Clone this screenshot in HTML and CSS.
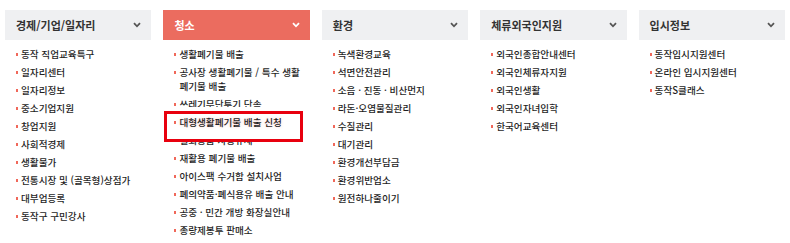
FILE: index.html
```html
<!DOCTYPE html>
<html lang="ko">
<head>
<meta charset="utf-8">
<link rel="stylesheet" href="styles.css">
</head>
<body>
<div class="menu">
  <section class="col">
    <h3 class="head">경제/기업/일자리<span class="chev"><svg width="8" height="6" viewBox="0 0 8 6"><path d="M1 1.2 L4 4.3 L7 1.2" fill="none" stroke="currentColor" stroke-width="1.8"/></svg></span></h3>
    <ul class="list">
      <li>동작 직업교육특구</li>
      <li>일자리센터</li>
      <li>일자리정보</li>
      <li>중소기업지원</li>
      <li>창업지원</li>
      <li>사회적경제</li>
      <li>생활물가</li>
      <li>전통시장 및 (골목형)상점가</li>
      <li>대부업등록</li>
      <li>동작구 구민강사</li>
    </ul>
  </section>
  <section class="col active">
    <h3 class="head">청소<span class="chev"><svg width="8" height="6" viewBox="0 0 8 6"><path d="M1 1.2 L4 4.3 L7 1.2" fill="none" stroke="currentColor" stroke-width="1.8"/></svg></span></h3>
    <ul class="list">
      <li>생활폐기물 배출</li>
      <li>공사장 생활폐기물 / 특수 생활폐기물 배출</li>
      <li>쓰레기무단투기 단속</li>
      <li class="marked">대형생활폐기물 배출 신청</li>
      <li>일회용품 사용규제</li>
      <li>재활용 폐기물 배출</li>
      <li>아이스팩 수거함 설치사업</li>
      <li>폐의약품·폐식용유 배출 안내</li>
      <li>공중 · 민간 개방 화장실안내</li>
      <li>종량제봉투 판매소</li>
    </ul>
  </section>
  <section class="col">
    <h3 class="head">환경<span class="chev"><svg width="8" height="6" viewBox="0 0 8 6"><path d="M1 1.2 L4 4.3 L7 1.2" fill="none" stroke="currentColor" stroke-width="1.8"/></svg></span></h3>
    <ul class="list">
      <li>녹색환경교육</li>
      <li>석면안전관리</li>
      <li>소음 · 진동 · 비산먼지</li>
      <li>라돈·오염물질관리</li>
      <li>수질관리</li>
      <li>대기관리</li>
      <li>환경개선부담금</li>
      <li>환경위반업소</li>
      <li>원전하나줄이기</li>
    </ul>
  </section>
  <section class="col">
    <h3 class="head">체류외국인지원<span class="chev"><svg width="8" height="6" viewBox="0 0 8 6"><path d="M1 1.2 L4 4.3 L7 1.2" fill="none" stroke="currentColor" stroke-width="1.8"/></svg></span></h3>
    <ul class="list">
      <li>외국인종합안내센터</li>
      <li>외국인체류자지원</li>
      <li>외국인생활</li>
      <li>외국인자녀입학</li>
      <li>한국어교육센터</li>
    </ul>
  </section>
  <section class="col">
    <h3 class="head">입시정보<span class="chev"><svg width="8" height="6" viewBox="0 0 8 6"><path d="M1 1.2 L4 4.3 L7 1.2" fill="none" stroke="currentColor" stroke-width="1.8"/></svg></span></h3>
    <ul class="list">
      <li>동작입시지원센터</li>
      <li>온라인 입시지원센터</li>
      <li>동작S클래스</li>
    </ul>
  </section>
</div>
</body>
</html>
```

FILE: styles.css
```css
* { box-sizing: border-box; }
html, body { margin: 0; padding: 0; background: #fff; }
body {
  font-family: "Noto Sans CJK KR", "Noto Sans", sans-serif;
  color: #333;
}
.menu {
  display: grid;
  grid-template-columns: repeat(5, 1fr);
  column-gap: 12px;
  width: 780px;
  margin: 10px 0 0 5px;
}
.head {
  margin: 0;
  height: 30px;
  display: flex;
  align-items: center;
  justify-content: space-between;
  padding: 0 10px 0 11px;
  background: #eff0f2;
  font-size: 11px;
  font-weight: 700;
  color: #333;
}
.chev { display: flex; color: #555; }
.active .head { background: #eb6c5f; color: #fff; }
.active .chev { color: #fff; }
.list {
  list-style: none;
  margin: 0;
  padding: 7px 5px 0 0;
}
.list li {
  position: relative;
  padding-left: 16px;
  font-size: 9.6px;
  font-weight: 500;
  line-height: 14px;
  margin-bottom: 4px;
  color: #1e1e1e;
}
.list li::before {
  content: "";
  position: absolute;
  left: 11px;
  top: 6px;
  width: 2px;
  height: 3px;
  background: #f0685a;
}
.list li.marked {
  z-index: 1;
  text-shadow: 0 0 3px rgba(240, 100, 100, 0.35);
}
.list li.marked::after {
  content: "";
  position: absolute;
  z-index: -1;
  left: 1px;
  top: -4px;
  width: 133px;
  height: 25px;
  border: 3px solid #e8000e;
  background: #fff;
  box-shadow: 0 -2px 0 2px #fff;
}
```
